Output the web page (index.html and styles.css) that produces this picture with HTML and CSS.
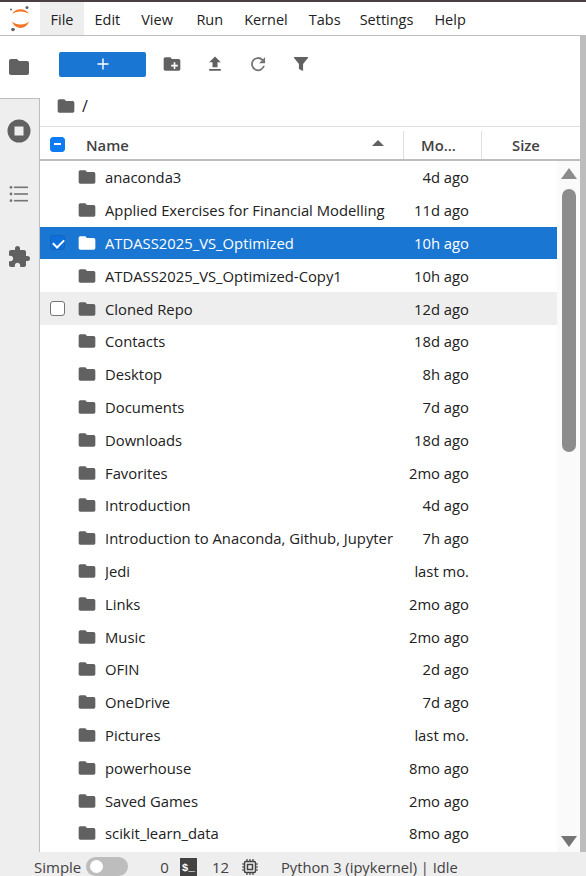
FILE: index.html
```html
<!DOCTYPE html>
<html lang="en">
<head>
  <meta charset="UTF-8">
  <title>JupyterLab</title>
  <link rel="stylesheet" href="styles.css">
</head>
<body>

  <div class="topline"></div>

  <!-- Menu -->
  <div class="menubar">
    <div class="logo">
      <svg width="26" height="30" viewBox="0 0 26 30">
        <path d="M5 10 C8 3.500 19 3.500 22 10 C18 6.500 9 6.500 5 10 Z" fill="#f37726"/>
        <path d="M5 17.500 C9 21.500 18 21.500 22 17.500 C19 26 8 26 5 17.500 Z" fill="#f37726"/>
        <circle cx="20" cy="3.500" r="1.500" fill="#616161"/>
        <circle cx="4" cy="5.500" r="1" fill="#616161"/>
        <circle cx="6" cy="25.500" r="1.800" fill="#616161"/>
      </svg>
    </div>
    <div class="menu-item active">File</div>
    <div class="menu-item">Edit</div>
    <div class="menu-item wide">View</div>
    <div class="menu-item">Run</div>
    <div class="menu-item">Kernel</div>
    <div class="menu-item tight">Tabs</div>
    <div class="menu-item">Settings</div>
    <div class="menu-item">Help</div>
  </div>

  <div class="main">
    <!-- Left side tabs -->
    <div class="sidebar">
      <div class="side-tab current">
        <svg width="24" height="24" viewBox="0 0 24 24"><path d="M10 4H4c-1.100 0-2 .9-2 2v12c0 1.100.9 2 2 2h16c1.100 0 2-.9 2-2V8c0-1.100-.9-2-2-2h-8l-2-2z" fill="#616161"/></svg>
      </div>
      <div class="side-tab">
        <svg width="24" height="24" viewBox="0 0 24 24"><path fill-rule="evenodd" d="M12 0.500a11.500 11.500 0 1 0 0 23a11.500 11.500 0 1 0 0-23zM7.500 7.500h9v9h-9z" fill="#616161"/></svg>
      </div>
      <div class="side-tab">
        <svg width="24" height="24" viewBox="0 0 24 24"><g fill="#757575"><rect x="7" y="4.500" width="14" height="1.600"/><rect x="7" y="11.200" width="14" height="1.600"/><rect x="7" y="17.900" width="14" height="1.600"/><circle cx="4" cy="5.300" r="1.400"/><circle cx="4" cy="12" r="1.400"/><circle cx="4" cy="18.700" r="1.400"/></g></svg>
      </div>
      <div class="side-tab">
        <svg width="24" height="24" viewBox="0 0 24 24"><path d="M20.500 11H19V7c0-1.100-.9-2-2-2h-4V3.500a2.500 2.500 0 0 0-5 0V5H4c-1.100 0-2 .9-2 2v3.800h1.500c1.500 0 2.700 1.200 2.700 2.700s-1.200 2.700-2.700 2.700H2V20c0 1.100.9 2 2 2h3.800v-1.500c0-1.500 1.200-2.700 2.700-2.700s2.700 1.200 2.700 2.700V22H17c1.100 0 2-.9 2-2v-4h1.500a2.500 2.500 0 0 0 0-5z" fill="#616161"/></svg>
      </div>
    </div>

    <!-- File browser -->
    <div class="browser">
      <div class="toolbar">
        <button class="new-btn">
          <svg width="14" height="14" viewBox="0 0 14 14"><path d="M7 1.500v11M1.500 7h11" stroke="#fff" stroke-width="1.400"/></svg>
        </button>
        <svg class="tool" width="20" height="20" viewBox="0 0 24 24"><path fill-rule="evenodd" d="M10 4H4c-1.100 0-2 .9-2 2v12c0 1.100.9 2 2 2h16c1.100 0 2-.9 2-2V8c0-1.100-.9-2-2-2h-8l-2-2zM14 10h2v3h3v2h-3v3h-2v-3h-3v-2h3z" fill="#616161"/></svg>
        <svg class="tool" width="20" height="20" viewBox="0 0 24 24"><path d="M9 16h6v-6h4l-7-7-7 7h4zM5 18h14v2H5z" fill="#616161"/></svg>
        <svg class="tool" width="20" height="20" viewBox="0 0 18 18"><path d="M13.950 4.050A7 7 0 1 0 15.770 10.750h-1.820a5.250 5.250 0 1 1-1.240-5.440L9.880 8.130H16V2z" fill="#757575" transform="translate(1 1) scale(.9)"/></svg>
        <svg class="tool" width="20" height="20" viewBox="0 0 24 24"><path d="M3.500 4.500C3.200 4.100 3.500 3.500 4 3.500h16c.5 0 .8.600.5 1L14.500 12v8.500l-5-2.500v-6z" fill="#616161"/></svg>
      </div>

      <div class="crumbs">
        <svg width="20" height="20" viewBox="0 0 24 24"><path d="M10 4H4c-1.100 0-2 .9-2 2v12c0 1.100.9 2 2 2h16c1.100 0 2-.9 2-2V8c0-1.100-.9-2-2-2h-8l-2-2z" fill="#616161"/></svg>
        <span>/</span>
      </div>

      <div class="list-head">
        <div class="col-check"><span class="check mixed"></span></div>
        <div class="col-name">
          <span>Name</span>
          <span class="sort-arrow"></span>
        </div>
        <div class="col-mod">Mo...</div>
        <div class="col-size">Size</div>
      </div>

      <div class="list-wrap">
        <ul class="files" id="files"></ul>
        <div class="scrollbar">
          <span class="arrow up"></span>
          <div class="thumb-track"><div class="thumb"></div></div>
          <span class="arrow down"></span>
        </div>
      </div>
    </div>

    <div class="edge"></div>
  </div>

  <!-- Status bar -->
  <div class="statusbar">
    <span class="simple">Simple</span>
    <span class="switch"><span class="knob"></span></span>
    <span class="num-a">0</span>
    <span class="term">$_</span>
    <span class="num-b">12</span>
    <svg class="chip" width="18" height="18" viewBox="0 0 18 18"><g fill="none" stroke="#424242"><rect x="3.500" y="3.500" width="11" height="11" rx="1.500" stroke-width="1.500"/><rect x="6.500" y="6.500" width="5" height="5" stroke-width="1.500"/><path d="M6 1v2M9 1v2M12 1v2M6 15v2M9 15v2M12 15v2M1 6h2M1 9h2M1 12h2M15 6h2M15 9h2M15 12h2" stroke-width="1.200"/></g></svg>
    <span class="kernel">Python 3 (ipykernel) | Idle</span>
  </div>

  <script>
    const files = [
      ["anaconda3", "4d ago"],
      ["Applied Exercises for Financial Modelling", "11d ago"],
      ["ATDASS2025_VS_Optimized", "10h ago", "selected"],
      ["ATDASS2025_VS_Optimized-Copy1", "10h ago"],
      ["Cloned Repo", "12d ago", "hover"],
      ["Contacts", "18d ago"],
      ["Desktop", "8h ago"],
      ["Documents", "7d ago"],
      ["Downloads", "18d ago"],
      ["Favorites", "2mo ago"],
      ["Introduction", "4d ago"],
      ["Introduction to Anaconda, Github, Jupyter", "7h ago"],
      ["Jedi", "last mo."],
      ["Links", "2mo ago"],
      ["Music", "2mo ago"],
      ["OFIN", "2d ago"],
      ["OneDrive", "7d ago"],
      ["Pictures", "last mo."],
      ["powerhouse", "8mo ago"],
      ["Saved Games", "2mo ago"],
      ["scikit_learn_data", "8mo ago"]
    ];

    const list = document.getElementById("files");
    const folder = '<svg width="20" height="20" viewBox="0 0 24 24"><path d="M10 4H4c-1.100 0-2 .9-2 2v12c0 1.100.9 2 2 2h16c1.100 0 2-.9 2-2V8c0-1.100-.9-2-2-2h-8l-2-2z" fill="currentColor"/></svg>';

    files.forEach(f => {
      const li = document.createElement("li");
      li.className = "file " + (f[2] || "");
      const box = f[2] === "selected" ? '<span class="check on"></span>' : f[2] === "hover" ? '<span class="check"></span>' : "";
      li.innerHTML = `<span class="col-check">${box}</span>
        <span class="file-icon">${folder}</span>
        <span class="file-name">${f[0]}</span>
        <span class="file-date">${f[1]}</span>`;
      list.appendChild(li);
    });
  </script>

</body>
</html>
```

FILE: styles.css
```css
* {
  box-sizing: border-box;
}

html, body {
  height: 100%;
}

body {
  margin: 0;
  display: flex;
  flex-direction: column;
  font-family: "Open Sans", sans-serif;
  font-size: 14.8px;
  color: #212121;
  background: white;
  overflow: hidden;
}

.topline {
  height: 2px;
  background: #4a3f45;
}

.menubar {
  height: 34px;
  display: flex;
  align-items: stretch;
  border-bottom: 1px solid #bdbdbd;
  font-size: 14.5px;
  flex: none;
}

.logo {
  width: 40px;
  display: flex;
  align-items: center;
  justify-content: center;
}

.menu-item {
  padding: 2px 10.5px 0;
  line-height: 32px;
}

.menu-item.wide {
  padding-right: 13px;
}

.menu-item.tight {
  padding-right: 8.5px;
}

.menu-item.active {
  background: #eeeeee;
}

.main {
  flex: 1;
  display: flex;
  min-height: 0;
}

.sidebar {
  width: 40px;
  flex: none;
  background: #eeeeee;
  border-right: 1px solid #bdbdbd;
}

.side-tab {
  height: 63px;
  display: flex;
  align-items: center;
  justify-content: center;
  padding-right: 1px;
}

.side-tab.current {
  background: white;
  border-bottom: 1px solid #bdbdbd;
  margin-right: -1px;
  padding-right: 2px;
  position: relative;
}

.browser {
  flex: 1;
  min-width: 0;
  display: flex;
  flex-direction: column;
}

.toolbar {
  height: 56px;
  padding: 0 0 0 19px;
  display: flex;
  align-items: center;
  flex: none;
}

.new-btn {
  width: 87px;
  height: 25px;
  border: none;
  border-radius: 2px;
  background: #1976d2;
  display: flex;
  align-items: center;
  justify-content: center;
  margin-right: 16px;
}

.tool {
  margin-right: 23px;
}

.crumbs {
  height: 35px;
  padding: 0 0 7px 16px;
  display: flex;
  align-items: center;
  gap: 6px;
  border-bottom: 1px solid #e0e0e0;
  font-size: 16px;
  flex: none;
}

.list-head {
  height: 34px;
  padding-top: 3px;
  display: flex;
  align-items: center;
  border-bottom: 2px solid #bdbdbd;
  font-weight: 600;
  color: #424242;
  flex: none;
}

.col-check {
  width: 35px;
  flex: none;
  display: flex;
  justify-content: center;
}

.col-name {
  flex: 1;
  display: flex;
  justify-content: space-between;
  align-items: center;
  padding: 0 19px 4px 11px;
  height: 28px;
  border-right: 1px solid #e0e0e0;
}

.col-name span:first-child {
  padding-top: 4px;
}

.sort-arrow {
  width: 0;
  height: 0;
  border-left: 6px solid transparent;
  border-right: 6px solid transparent;
  border-bottom: 6px solid #616161;
}

.col-mod {
  width: 78px;
  height: 28px;
  line-height: 28px;
  padding-left: 17px;
  border-right: 1px solid #e0e0e0;
  white-space: nowrap;
}

.col-size {
  width: 98px;
  padding-left: 30px;
}

.check {
  width: 15px;
  height: 15px;
  display: block;
  border: 1px solid #757575;
  border-radius: 3px;
  background: white;
  position: relative;
}

.check.mixed {
  background: #0d7cf2;
  border-color: #0d7cf2;
}

.check.mixed::after {
  content: "";
  position: absolute;
  left: 3px;
  top: 5px;
  width: 7px;
  height: 2px;
  background: white;
}

.check.on {
  background: #0d6fdc;
  border-color: #1565c0;
}

.check.on::after {
  content: "";
  position: absolute;
  left: 4px;
  top: 1px;
  width: 5px;
  height: 9px;
  border: solid white;
  border-width: 0 2px 2px 0;
  transform: rotate(45deg);
}

.list-wrap {
  flex: 1;
  min-height: 0;
  display: flex;
}

.files {
  list-style: none;
  margin: 0;
  padding: 0;
  flex: 1;
  min-width: 0;
  overflow: hidden;
}

.file {
  height: 32.8px;
  display: flex;
  align-items: center;
}

.file.selected {
  background: #1976d2;
  color: white;
}

.file.hover {
  background: #eeeeee;
}

.file-icon {
  width: 30px;
  padding-left: 2px;
  flex: none;
  display: flex;
  color: #616161;
}

.file.selected .file-icon {
  color: white;
}

.file-name {
  flex: 1;
  white-space: nowrap;
  overflow: hidden;
}

.file-date {
  width: 75px;
  flex: none;
  text-align: right;
  margin-right: 88px;
  white-space: nowrap;
}

.scrollbar {
  width: 23px;
  flex: none;
  background: #fafafa;
  display: flex;
  flex-direction: column;
  align-items: center;
  padding: 7px 0 5px;
}

.arrow {
  width: 0;
  height: 0;
  border-left: 8px solid transparent;
  border-right: 8px solid transparent;
  flex: none;
}

.arrow.up {
  border-bottom: 11px solid #8c8c8c;
}

.arrow.down {
  border-top: 11px solid #757575;
}

.thumb-track {
  flex: 1;
  width: 100%;
  padding-top: 10px;
}

.thumb {
  width: 14px;
  height: 263px;
  margin: 0 auto;
  background: #8c8c8c;
  border-radius: 7px;
}

.edge {
  width: 6px;
  flex: none;
  background: #bdbdbd;
}

.statusbar {
  height: 24px;
  flex: none;
  background: #eeeeee;
  display: flex;
  align-items: center;
  padding: 5px 0 0 34px;
  font-size: 15px;
  color: #424242;
}

.switch {
  width: 42px;
  height: 19px;
  margin-left: 5px;
  border-radius: 10px;
  background: #bdbdbd;
  padding: 2px;
}

.knob {
  display: block;
  width: 13px;
  height: 13px;
  margin: 1px 0 0 2px;
  border-radius: 50%;
  background: white;
}

.num-a {
  margin-left: 32px;
}

.term {
  width: 17px;
  height: 18px;
  margin-left: 11px;
  background: #424242;
  color: white;
  font-family: "Liberation Mono", monospace;
  font-size: 11px;
  font-weight: 700;
  line-height: 20px;
  text-align: center;
}

.num-b {
  margin-left: 15px;
}

.chip {
  margin-left: 12px;
}

.kernel {
  margin-left: 22px;
  font-size: 14.7px;
}
```
